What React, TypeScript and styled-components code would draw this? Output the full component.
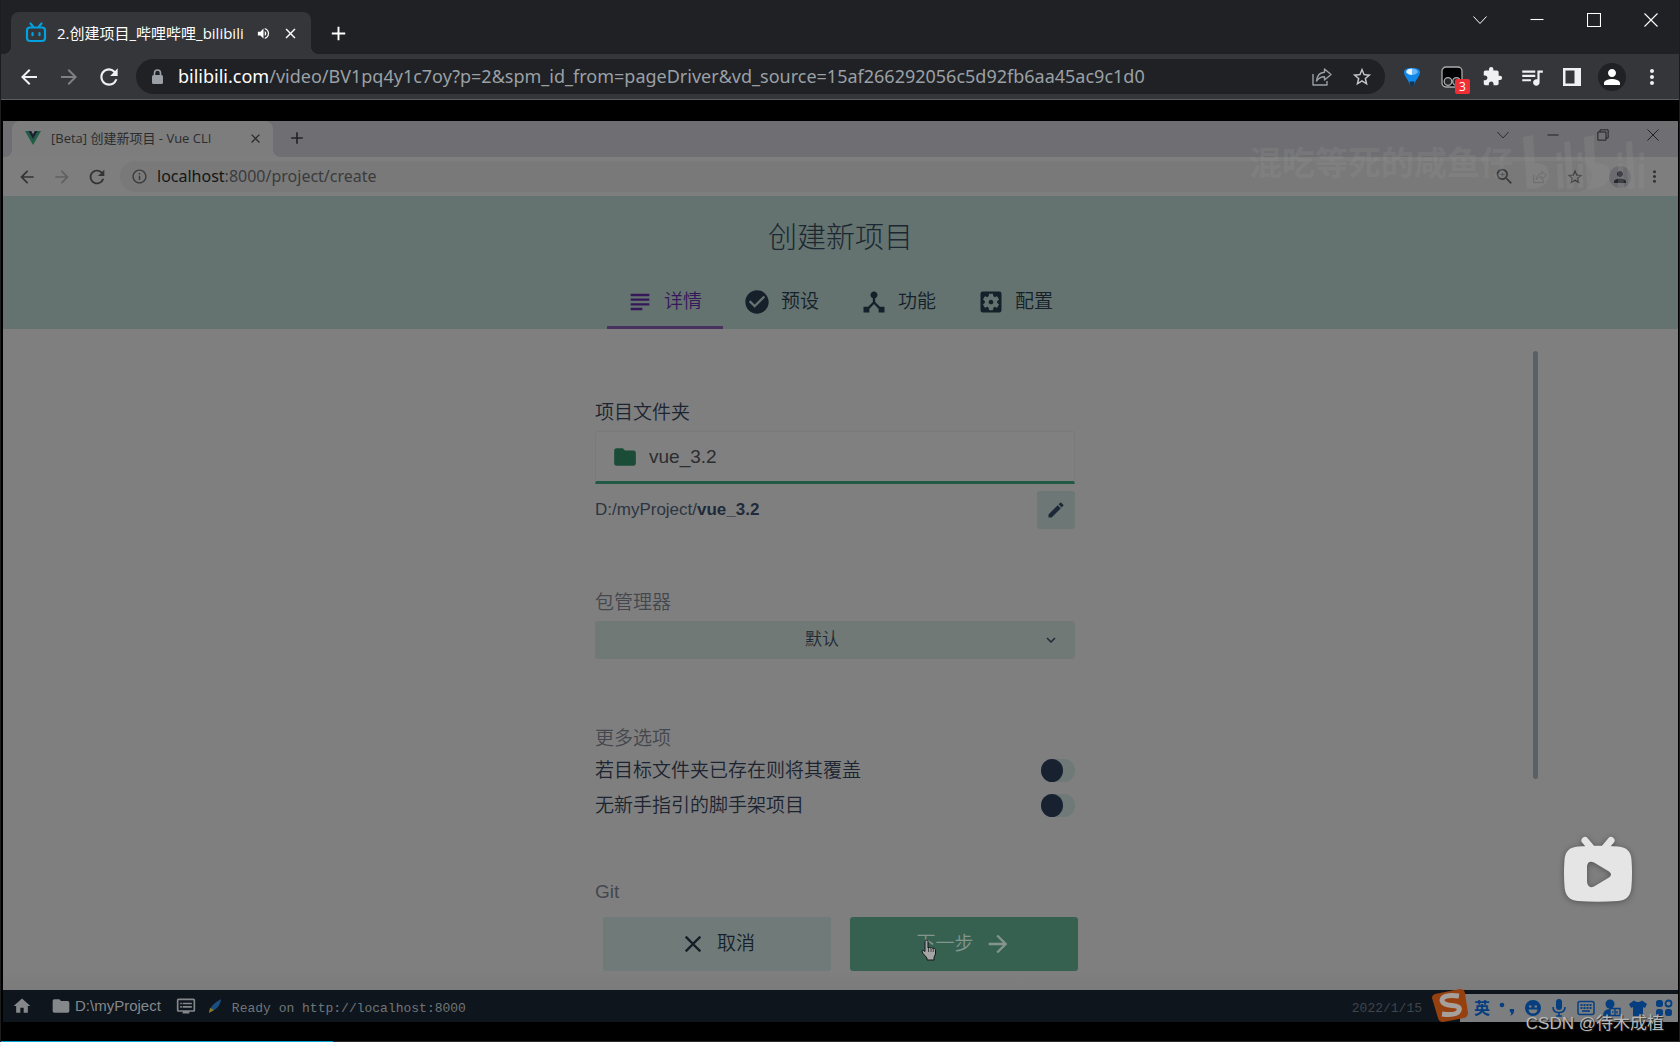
import React from "react";
import styled, { createGlobalStyle, css } from "styled-components";
import {
  MdArrowBack,
  MdArrowForward,
  MdCheckCircle,
  MdClose,
  MdDeviceHub,
  MdDvr,
  MdEdit,
  MdExtension,
  MdFolder,
  MdHome,
  MdKeyboardArrowDown,
  MdMoreVert,
  MdOutlineInfo,
  MdPerson,
  MdQueueMusic,
  MdRefresh,
  MdAdd,
  MdSettingsApplications,
  MdStarBorder,
  MdSubject,
  MdVolumeUp,
  MdZoomIn,
} from "react-icons/md";

const UI_FONT = `"Open Sans", "Noto Sans CJK SC", sans-serif`;
const APP_FONT = `"Liberation Sans", "Noto Sans CJK SC", sans-serif`;
const MONO_FONT = `"Liberation Mono", monospace`;

const GlobalStyle = createGlobalStyle`
  *, *::before, *::after { box-sizing: border-box; }
  body { margin: 0; background: #000; font-family: ${UI_FONT}; }
  button, input, select { font: inherit; color: inherit; }
  button { background: none; border: 0; padding: 0; }
  svg { display: block; flex: none; }
`;

/* ---------- outer browser ---------- */

const Window = styled.div`
  display: flex;
  flex-direction: column;
  height: 100vh;
  border: solid #1c1d1f;
  border-width: 0 1px;
  position: relative;
  overflow: hidden;
`;

const TabStrip = styled.div<{ $inner?: boolean }>`
  display: flex;
  align-items: flex-end;
  flex: none;
  height: ${(p) => (p.$inner ? 36 : 54)}px;
  padding-left: ${(p) => (p.$inner ? 9 : 10)}px;
  background: ${(p) => (p.$inner ? "#6f6f73" : "#202124")};
`;

const BrowserTab = styled.div<{ $inner?: boolean }>`
  --tab: ${(p) => (p.$inner ? "#7d7d7d" : "#35363a")};
  position: relative;
  display: flex;
  align-items: center;
  width: ${(p) => (p.$inner ? 261 : 300)}px;
  height: ${(p) => (p.$inner ? 36 : 42)}px;
  padding: ${(p) => (p.$inner ? "0 9px 2px 13px" : "0 12px 0 14px")};
  border-radius: 8px 8px 0 0;
  background: var(--tab);
  color: ${(p) => (p.$inner ? "#2b2c2e" : "#fff")};
  font-size: ${(p) => (p.$inner ? 13 : 15)}px;
  line-height: 20px;

  &::before,
  &::after {
    content: "";
    position: absolute;
    bottom: 0;
    width: 8px;
    height: 8px;
  }
  &::before {
    right: 100%;
    background: radial-gradient(circle at 0 0, transparent 8px, var(--tab) 8px);
  }
  &::after {
    left: 100%;
    background: radial-gradient(circle at 100% 0, transparent 8px, var(--tab) 8px);
  }
`;

const TabTitle = styled.span`
  flex: 1;
  margin-left: 10px;
  white-space: nowrap;
`;

const TabButton = styled.button`
  display: grid;
  place-items: center;
  width: 18px;
  height: 18px;
`;

const TabSound = styled(TabButton)`
  margin-right: 9px;
`;

const NewTab = styled.button<{ $inner?: boolean }>`
  display: grid;
  place-items: center;
  align-self: ${(p) => (p.$inner ? "flex-start" : "flex-end")};
  width: 32px;
  height: ${(p) => (p.$inner ? 34 : 42)}px;
  margin-left: ${(p) => (p.$inner ? 8 : 11)}px;
  color: ${(p) => (p.$inner ? "#232427" : "#fff")};
`;

const Controls = styled.div<{ $inner?: boolean }>`
  display: flex;
  align-self: flex-start;
  margin-left: auto;
  color: ${(p) => (p.$inner ? "#1e1f21" : "#fff")};

  button {
    display: grid;
    place-items: center;
    width: ${(p) => (p.$inner ? 50 : 57)}px;
    height: ${(p) => (p.$inner ? 28 : 40)}px;
  }
`;

const Toolbar = styled.div<{ $inner?: boolean }>`
  display: flex;
  align-items: center;
  flex: none;
  height: ${(p) => (p.$inner ? 39 : 46)}px;
  padding: ${(p) => (p.$inner ? "0 6px" : "0 7px 0 8px")};
  background: ${(p) => (p.$inner ? "#7e7e7e" : "#35363a")};
  border-bottom: ${(p) => (p.$inner ? "0" : "1px solid #5c5d60")};
  color: ${(p) => (p.$inner ? "#333436" : "#eef0f2")};
`;

const ToolButton = styled.button<{ $size?: number; $dim?: boolean }>`
  position: relative;
  display: grid;
  place-items: center;
  width: ${(p) => p.$size ?? 40}px;
  height: 34px;
  opacity: ${(p) => (p.$dim ? 0.4 : 1)};
`;

const Omnibox = styled.div<{ $inner?: boolean }>`
  display: flex;
  align-items: center;
  flex: 1;
  height: ${(p) => (p.$inner ? 31 : 35)}px;
  margin: ${(p) => (p.$inner ? "0 10px 0 6px" : "0 7px")};
  padding: ${(p) => (p.$inner ? "0 0 0 11px" : "0 3px 0 15px")};
  border-radius: 18px;
  background: ${(p) => (p.$inner ? "#797979" : "#202124")};
  color: ${(p) => (p.$inner ? "#3a3b3d" : "#9aa0a6")};
`;

const Url = styled.div<{ $inner?: boolean }>`
  flex: 1;
  margin-left: ${(p) => (p.$inner ? 9 : 14)}px;
  padding-bottom: 2px;
  font-family: "Noto Sans", ${UI_FONT};
  font-size: ${(p) => (p.$inner ? 16 : 18)}px;
  line-height: 24px;
  white-space: nowrap;
  overflow: hidden;

  b {
    font-weight: 400;
    color: ${(p) => (p.$inner ? "#141516" : "#fff")};
  }
`;

const Badge = styled.span`
  position: absolute;
  right: 2px;
  bottom: 0;
  width: 15px;
  height: 15px;
  border-radius: 2px;
  background: #ef2f35;
  color: #fff;
  font-size: 12px;
  line-height: 15px;
  text-align: center;
`;

const Avatar = styled.span<{ $inner?: boolean }>`
  display: grid;
  place-items: center;
  width: ${(p) => (p.$inner ? 22 : 28)}px;
  height: ${(p) => (p.$inner ? 22 : 28)}px;
  border-radius: 50%;
  background: ${(p) => (p.$inner ? "#6c6c70" : "#202124")};
  color: ${(p) => (p.$inner ? "#25262e" : "#fff")};
`;

/* ---------- video ---------- */

const Player = styled.main`
  display: flex;
  flex-direction: column;
  flex: 1;
  min-height: 0;
  padding: 21px 1px 0 2px;
  background: #000;
`;

const Frame = styled.section`
  position: relative;
  display: flex;
  flex-direction: column;
  flex: 1;
  min-height: 0;
  background: #7f7f7f;
`;

const Progress = styled.div`
  flex: none;
  height: 1px;
  margin: 19px -1px 0 -2px;
  background: #2a2a2a;
`;

const Played = styled.div`
  height: 1px;
  background: #00a1d6;
`;

const Uploader = styled.div`
  position: absolute;
  top: 14px;
  right: 30px;
  display: flex;
  align-items: center;
  gap: 10px;
  color: rgba(150, 150, 150, 0.24);
  font-size: 33px;
  font-weight: 700;
  line-height: 48px;
  pointer-events: none;
`;

const PlayBadge = styled.button`
  position: absolute;
  right: 46px;
  bottom: 120px;
  filter: drop-shadow(0 1px 3px rgba(0, 0, 0, 0.35));
`;

/* ---------- project wizard ---------- */

const Header = styled.header`
  display: flex;
  flex-direction: column;
  align-items: center;
  justify-content: space-between;
  flex: none;
  height: 133px;
  padding-top: 22px;
  background: #64736f;
  color: #1b2731;
`;

const Title = styled.h1`
  margin: 0;
  font-family: ${APP_FONT};
  font-size: 29px;
  font-weight: 300;
  line-height: 40px;
`;

const Steps = styled.nav`
  display: flex;
  gap: 1px;
  font-family: ${APP_FONT};
`;

const Step = styled.button<{ $active?: boolean }>`
  display: flex;
  align-items: center;
  gap: 10px;
  height: 56px;
  padding: 5px 21px 0 19px;
  border-bottom: 3px solid ${(p) => (p.$active ? "#48305f" : "transparent")};
  color: ${(p) => (p.$active ? "#35185a" : "#15202a")};
  font-size: 19px;
  font-weight: 350;
  line-height: 28px;
`;

const Scroll = styled.div`
  display: grid;
  grid-template-columns: 1fr 480px 1fr;
  flex: 1;
  min-height: 0;
  padding-right: 11px;
  overflow: hidden;
  color: #1b2430;
  font-family: ${APP_FONT};
  font-size: 19px;
  font-weight: 350;
  line-height: 28px;
`;

const Thumb = styled.div`
  grid-column: 3;
  justify-self: end;
  width: 5px;
  height: 428px;
  margin: 22px 129px 0 0;
  border-radius: 3px;
  background: #596167;
`;

const Form = styled.form`
  grid-column: 2;
  display: flex;
  flex-direction: column;
  padding-top: 70px;
`;

const Group = styled.fieldset<{ $after: number }>`
  display: flex;
  flex-direction: column;
  min-width: 0;
  margin: 0 0 ${(p) => p.$after}px;
  padding: 0;
  border: 0;
`;

const labelStyle = css<{ $soft?: boolean }>`
  padding: 0;
  color: ${(p) => (p.$soft ? "#44474e" : "#1b2430")};
`;

const Label = styled.label<{ $soft?: boolean }>`
  ${labelStyle}
  margin-bottom: 4px;
`;

const Legend = styled.legend<{ $soft?: boolean }>`
  ${labelStyle}
`;

const FolderField = styled.div`
  display: flex;
  align-items: center;
  gap: 11px;
  height: 53px;
  padding: 0 16px;
  border: 1px solid #7a7a7a;
  border-bottom: 3px solid #235a45;
  border-radius: 3px 3px 0 0;
  background: #808080;
  color: #1a4c38;

  input {
    flex: 1;
    min-width: 0;
    padding: 0;
    border: 0;
    outline: 0;
    background: none;
    color: #2b2d31;
  }
`;

const PathRow = styled.div`
  display: flex;
  justify-content: space-between;
  margin-top: 7px;
  color: #2c3542;
  font-size: 17px;
  line-height: 38px;

  b {
    color: #1f2b3a;
  }
`;

const EditButton = styled.button`
  display: grid;
  place-items: center;
  width: 38px;
  height: 38px;
  border-radius: 3px;
  background: #6d7775;
  color: #1d2838;
`;

const SelectBox = styled.div`
  position: relative;
  color: #1f2a33;

  select {
    appearance: none;
    width: 100%;
    height: 38px;
    padding: 0 26px 0 0;
    border: 0;
    border-radius: 3px;
    background: #717977;
    font-size: 17px;
    text-align: center;
    text-align-last: center;
  }

  svg {
    position: absolute;
    top: 10px;
    right: 15px;
    pointer-events: none;
  }
`;

const SwitchRow = styled.label`
  display: flex;
  align-items: center;
  justify-content: space-between;
  height: 35px;
`;

const Switch = styled.input`
  appearance: none;
  width: 34px;
  height: 23px;
  margin: 0;
  border-radius: 12px;
  background: #6f7977;

  &::before {
    content: "";
    display: block;
    width: 22px;
    height: 23px;
    border-radius: 50%;
    background: #182130;
  }
`;

const Actions = styled.footer`
  display: flex;
  justify-content: center;
  gap: 19px;
  flex: none;
  padding: 19px 0;
  background: linear-gradient(#7f7f7f 80%, #7b7b7b);
`;

const Action = styled.button<{ $primary?: boolean }>`
  position: relative;
  display: flex;
  align-items: center;
  justify-content: center;
  gap: 10px;
  width: 228px;
  height: 54px;
  border-radius: 3px;
  background: ${(p) => (p.$primary ? "#366151" : "#707a78")};
  color: ${(p) => (p.$primary ? "#83958e" : "#161f29")};
  font-family: ${APP_FONT};
  font-size: 19px;
  font-weight: 350;
  line-height: 28px;
`;

const HandCursor = styled.svg`
  position: absolute;
  left: 71px;
  top: 22px;
`;

/* ---------- status bar ---------- */

const Status = styled.div`
  display: flex;
  align-items: center;
  flex: none;
  height: 32px;
  padding-left: 9px;
  background: #0e151d;
  color: #85888b;
`;

const StatusPath = styled.button`
  display: flex;
  align-items: center;
  gap: 4px;
  margin: 0 15px 0 19px;
  font-family: ${APP_FONT};
  font-size: 15px;
  line-height: 20px;
`;

const Log = styled.span<{ $faint?: boolean }>`
  margin: ${(p) => (p.$faint ? "5px 0 0 auto" : "5px 0 0 10px")};
  color: ${(p) => (p.$faint ? "#3f454b" : "#70757a")};
  font-family: ${MONO_FONT};
  font-size: 13px;
  line-height: 20px;
`;

const Quill = styled.svg`
  margin-left: 12px;
`;

const Ime = styled.div`
  position: relative;
  display: flex;
  align-items: center;
  align-self: flex-end;
  justify-content: space-between;
  width: 218px;
  height: 28px;
  margin-left: 38px;
  padding: 0 5px 0 14px;
  background: #7d7e80;
  color: #063f80;
  font-size: 16px;
  font-weight: 700;
  line-height: 24px;
`;

const Sogou = styled.svg`
  position: absolute;
  left: -28px;
  bottom: 0;
`;

const Credit = styled.div`
  position: absolute;
  right: 15px;
  bottom: 6px;
  color: #b9b9b9;
  font-family: ${APP_FONT};
  font-size: 17px;
  line-height: 24px;
  text-shadow: 1px 1px 1px #222;
`;

/* ---------- drawings ---------- */

const BiliIcon = () => (
  <svg width="22" height="22" viewBox="0 0 22 22" fill="none" stroke="#00a1e0" strokeLinecap="round">
    <rect x="2" y="5.5" width="18" height="13.5" rx="3" strokeWidth="2.2" />
    <path d="M5.500 1.500 8 4.500M16.500 1.500 14 4.500" strokeWidth="2.2" />
    <path d="M7.500 11v2.200M14.500 11v2.200" strokeWidth="2.200" />
  </svg>
);

const VueIcon = () => (
  <svg width="16" height="14" viewBox="0 0 16 14">
    <path d="M0 0h3.2L8 8.3 12.8 0H16L8 14z" fill="#1f5e46" />
    <path d="M3.2 0H6.2L8 3.2 9.8 0h3L8 8.3z" fill="#19222e" />
  </svg>
);

const LockIcon = () => (
  <svg width="13" height="16" viewBox="0 0 13 16">
    <rect x="1" y="6" width="11" height="9" rx="1.5" fill="currentColor" />
    <path d="M3.500 7V4a3 3 0 016 0v3" fill="none" stroke="currentColor" strokeWidth="1.600" />
  </svg>
);

const ShareIcon = ({ size = 20 }: { size?: number }) => (
  <svg width={size} height={size} viewBox="0 0 20 20" fill="none" stroke="currentColor" strokeWidth="1.4" strokeLinejoin="round">
    <path d="M1 7v11h14v-4" />
    <path d="M12.5 2 19 7.5 12.5 13V9.8C9 9.8 6.500 11 4.500 14 5 9 8 5.500 12.500 5.200z" />
  </svg>
);

const Chevron = ({ size = 14 }: { size?: number }) => (
  <svg width={size} height={size} viewBox="0 0 14 14" fill="none" stroke="currentColor">
    <path d="M.5 3.500 7 10.500 13.500 3.500" />
  </svg>
);

const WinIcon = ({ d, size = 14 }: { d: string; size?: number }) => (
  <svg width={size} height={size} viewBox="0 0 14 14" fill="none" stroke="currentColor" strokeWidth="1.1">
    <path d={d} />
  </svg>
);

const BalloonIcon = () => (
  <svg width="18" height="20" viewBox="0 0 18 20">
    <path d="M1 5.500C1 2 4 1 9 1s8 1 8 4.500S13 12 10.500 19h-3C5 12 1 9 1 5.500z" fill="#1187ea" />
    <path d="M3 5C3.500 2.500 6 1.500 9 1.500V8Q5 8 3 5z" fill="#e6f3ff" />
    <path d="M9 1.500c3 0 5 1 6 3.500Q13 8 9 8z" fill="#6db9f6" />
    <path d="M6.500 14.500h5L10.500 19h-3z" fill="#16324f" />
  </svg>
);

const MonkeyIcon = () => (
  <svg width="22" height="22" viewBox="0 0 22 22" stroke="#a9abad" strokeWidth="1.300">
    <rect x="1" y="1" width="20" height="20" rx="4" fill="#000" />
    <circle cx="7" cy="15.500" r="3.800" fill="#26272a" />
    <circle cx="15.500" cy="15.500" r="3.800" fill="#26272a" />
  </svg>
);

const PanelIcon = () => (
  <svg width="18" height="18" viewBox="0 0 18 18">
    <path d="M0 0h18v18H0zM2.500 2.500v13h9v-13z" fill="currentColor" fillRule="evenodd" />
  </svg>
);

const BiliWordmark = () => (
  <svg width="125" height="56" viewBox="0 0 125 56" fill="currentColor">
    <path d="M0 2l10-2 2 28q13-1 14 12-1 14-22 14z" />
    <path d="M33 18l5-1 1 8-5 1zM34 29l5-1 2 25-6 1zM41 7l6-1 4 47-7 1zM54 18l5-1v8l-4 1zM55 29l5-1v25h-5z" />
    <path d="M61 2l10-2 1 28q15-1 15 12-1 14-23 14z" />
    <path d="M94 18l5-1v8l-4 1zM95 29l5-1 1 25h-6zM103 7l6-1 3 47-7 1zM116 18l5-1v8l-4 1zM116 29l5-1v25l-5 1z" />
  </svg>
);

const TvPlay = () => (
  <svg width="68" height="66" viewBox="0 0 68 66" fill="#e5e5e5">
    <path d="M21 4.500 29 14M47 4.500 39 14" stroke="#e5e5e5" strokeWidth="7" strokeLinecap="round" />
    <path
      fillRule="evenodd"
      d="M14 10.500Q34 9 54 10.500 67 11.500 67.500 24 68.500 37 67.500 50 67 64 54 65 34 66.500 14 65 1 64 .5 50-.5 37 .5 24 1 11.500 14 10.500zM23 30v16q1 7 7 4.500l15-9q4-3 0-6l-15-9Q24 24 23 30z"
    />
  </svg>
);

const ImeIcon = ({ children }: { children: React.ReactNode }) => (
  <svg width="18" height="18" viewBox="0 0 18 18" fill="currentColor">
    {children}
  </svg>
);

const PLAYED = 0.198;

export default function App() {
  return (
    <Window>
      <GlobalStyle />
      <TabStrip>
        <BrowserTab>
          <BiliIcon />
          <TabTitle>2.创建项目_哔哩哔哩_bilibili</TabTitle>
          <TabSound aria-label="静音">
            <MdVolumeUp size={15} />
          </TabSound>
          <TabButton aria-label="关闭标签页">
            <MdClose size={17} />
          </TabButton>
        </BrowserTab>
        <NewTab aria-label="新标签页">
          <MdAdd size={23} />
        </NewTab>
        <Controls>
          <button aria-label="搜索标签页"><Chevron /></button>
          <button aria-label="最小化"><WinIcon d="M.5 6.500h13" /></button>
          <button aria-label="最大化"><WinIcon d="M.5.5h13v13H.5z" /></button>
          <button aria-label="关闭"><WinIcon d="M.5.5l13 13M13.500.5l-13 13" /></button>
        </Controls>
      </TabStrip>
      <Toolbar>
        <ToolButton aria-label="后退"><MdArrowBack size={24} /></ToolButton>
        <ToolButton aria-label="前进" $dim><MdArrowForward size={24} /></ToolButton>
        <ToolButton aria-label="重新加载"><MdRefresh size={26} /></ToolButton>
        <Omnibox>
          <LockIcon />
          <Url role="textbox" aria-label="地址">
            <b>bilibili.com</b>/video/BV1pq4y1c7oy?p=2&amp;spm_id_from=pageDriver&amp;vd_source=15af266292056c5d92fb6aa45ac9c1d0
          </Url>
          <ToolButton aria-label="分享"><ShareIcon /></ToolButton>
          <ToolButton aria-label="收藏"><MdStarBorder size={22} color="#c4c7ca" /></ToolButton>
        </Omnibox>
        <ToolButton aria-label="扩展"><BalloonIcon /></ToolButton>
        <ToolButton aria-label="脚本">
          <MonkeyIcon />
          <Badge>3</Badge>
        </ToolButton>
        <ToolButton aria-label="扩展程序"><MdExtension size={21} /></ToolButton>
        <ToolButton aria-label="媒体"><MdQueueMusic size={26} /></ToolButton>
        <ToolButton aria-label="侧边栏"><PanelIcon /></ToolButton>
        <ToolButton aria-label="用户">
          <Avatar><MdPerson size={24} /></Avatar>
        </ToolButton>
        <ToolButton aria-label="菜单"><MdMoreVert size={24} /></ToolButton>
      </Toolbar>

      <Player>
        <Frame>
          <TabStrip $inner>
            <BrowserTab $inner>
              <VueIcon />
              <TabTitle>[Beta] 创建新项目 - Vue CLI</TabTitle>
              <TabButton aria-label="关闭标签页"><MdClose size={15} /></TabButton>
            </BrowserTab>
            <NewTab $inner aria-label="新标签页"><MdAdd size={20} /></NewTab>
            <Controls $inner>
              <button aria-label="搜索标签页"><Chevron size={12} /></button>
              <button aria-label="最小化"><WinIcon size={12} d="M.5 7h13" /></button>
              <button aria-label="还原"><WinIcon size={12} d="M1 3.500h9.500V13H1zM3.500 3.500V1H13v9.500h-2.500" /></button>
              <button aria-label="关闭"><WinIcon size={12} d="M.5.5l13 13M13.500.5l-13 13" /></button>
            </Controls>
          </TabStrip>
          <Toolbar $inner>
            <ToolButton $size={35} aria-label="后退"><MdArrowBack size={20} /></ToolButton>
            <ToolButton $size={35} aria-label="前进" $dim><MdArrowForward size={20} /></ToolButton>
            <ToolButton $size={35} aria-label="重新加载"><MdRefresh size={22} /></ToolButton>
            <Omnibox $inner>
              <MdOutlineInfo size={17} />
              <Url $inner role="textbox" aria-label="地址">
                <b>localhost</b>:8000/project/create
              </Url>
              <ToolButton $size={35} aria-label="缩放"><MdZoomIn size={21} /></ToolButton>
              <ToolButton $size={35} aria-label="分享" $dim><ShareIcon size={14} /></ToolButton>
              <ToolButton $size={35} aria-label="收藏"><MdStarBorder size={18} /></ToolButton>
            </Omnibox>
            <ToolButton $size={35} aria-label="用户">
              <Avatar $inner><MdPerson size={18} /></Avatar>
            </ToolButton>
            <ToolButton $size={35} aria-label="菜单"><MdMoreVert size={19} /></ToolButton>
          </Toolbar>

          <Header>
            <Title>创建新项目</Title>
            <Steps>
              <Step $active><MdSubject size={28} />详情</Step>
              <Step><MdCheckCircle size={28} />预设</Step>
              <Step><MdDeviceHub size={28} />功能</Step>
              <Step><MdSettingsApplications size={28} />配置</Step>
            </Steps>
          </Header>

          <Scroll>
            <Form>
              <Group $after={60}>
                <Label htmlFor="folder">项目文件夹</Label>
                <FolderField>
                  <MdFolder size={26} />
                  <input id="folder" defaultValue="vue_3.2" />
                </FolderField>
                <PathRow>
                  <span>D:/myProject/<b>vue_3.2</b></span>
                  <EditButton type="button" aria-label="编辑路径"><MdEdit size={20} /></EditButton>
                </PathRow>
              </Group>
              <Group $after={66}>
                <Label $soft htmlFor="manager">包管理器</Label>
                <SelectBox>
                  <select id="manager"><option>默认</option></select>
                  <MdKeyboardArrowDown size={18} />
                </SelectBox>
              </Group>
              <Group $after={55}>
                <Legend $soft>更多选项</Legend>
                <SwitchRow>
                  若目标文件夹已存在则将其覆盖
                  <Switch type="checkbox" />
                </SwitchRow>
                <SwitchRow>
                  无新手指引的脚手架项目
                  <Switch type="checkbox" />
                </SwitchRow>
              </Group>
              <Group $after={0}>
                <Legend $soft>Git</Legend>
              </Group>
            </Form>
            <Thumb />
          </Scroll>

          <Actions>
            <Action><MdClose size={28} />取消</Action>
            <Action $primary>
              下一步
              <MdArrowForward size={28} />
              <HandCursor width="16" height="22" viewBox="0 0 16 22" fill="#a5a5a5" stroke="#15181a">
                <path d="M5.500 1q1.500 0 1.500 1.500V9l1-1 1.500 1 1-.5 1.500 1 1.200-.3 1.300 1.300v4.500L13 18.500V21H6v-2L2 14.500.8 12q1.200-1.500 3.200.5V2.500Q4 1 5.500 1z" />
                <path d="M7.500 9v4M10 9.500V13M12.300 10v3" strokeWidth=".7" />
              </HandCursor>
            </Action>
          </Actions>

          <Status>
            <MdHome size={20} />
            <StatusPath><MdFolder size={20} />D:\myProject</StatusPath>
            <MdDvr size={20} />
            <Quill width="14" height="16" viewBox="0 0 14 16">
              <path d="M1 14Q2 7 13 1q0 7-8 12z" fill="#1b4f80" />
              <path d="M1 15l1-5 4 2z" fill="#8d7a1e" />
            </Quill>
            <Log>Ready on http://localhost:8000</Log>
            <Log $faint>2022/1/15</Log>
            <Ime>
              <Sogou width="36" height="33" viewBox="0 0 36 33">
                <path d="M3 5 28 0q4 0 5 4l3 20q0 4-4 5L11 33q-4 0-5-4L0 9q0-3 3-4z" fill="#96400f" />
                <path d="M27 7Q10 5 10 11.500 11 16 20 16.500T27 21.500Q25 27 10 25" fill="none" stroke="#a6a09c" strokeWidth="5" />
              </Sogou>
              英
              <ImeIcon><circle cx="4" cy="6" r="2.300" /><path d="M12 10h4q1 5-4 7 2-2 1-3.500-2-1-1-3.500z" /></ImeIcon>
              <ImeIcon>
                <path fillRule="evenodd" d="M9 1a8 8 0 100 16A8 8 0 009 1zM5 6.500h2.500v2H5zM10.500 6.500H13v2h-2.500zM4.500 10.500h9Q13 14.500 9 14.500t-4.500-4z" />
              </ImeIcon>
              <ImeIcon>
                <rect x="6" y="0" width="6" height="11" rx="3" />
                <path d="M3 8q0 5.500 6 5.500T15 8M9 13v4M6 17h6" fill="none" stroke="currentColor" strokeWidth="1.600" />
              </ImeIcon>
              <ImeIcon>
                <rect x="1" y="2.500" width="16" height="13" rx="2" fill="none" stroke="currentColor" strokeWidth="1.500" />
                <path d="M3.500 6h11M3.500 9h11" stroke="currentColor" strokeWidth="2" strokeDasharray="2 1" />
                <path d="M5 12h8" stroke="currentColor" strokeWidth="1.600" />
              </ImeIcon>
              <ImeIcon>
                <circle cx="7" cy="5" r="4.500" />
                <path d="M0 17q0-7 7-7v7z" />
                <path d="M7 9.500h10v7H7zM12 9.500v7M9 13h1.500M14 12v2.500" fill="none" stroke="currentColor" strokeWidth="1.400" />
              </ImeIcon>
              <ImeIcon><path d="M5 1.500q4 3 8 0l5 3.500-2 4-2-1v9H4V8L2 9 0 5z" /></ImeIcon>
              <ImeIcon>
                <rect x="1" y="1" width="7" height="7" rx="2.500" />
                <circle cx="13.500" cy="4.500" r="3" fill="none" stroke="currentColor" strokeWidth="1.800" />
                <rect x="1" y="10" width="7" height="7" rx="2.500" />
                <rect x="10" y="10" width="7" height="7" rx="2.500" />
              </ImeIcon>
            </Ime>
          </Status>

          <Uploader aria-hidden>
            混吃等死的咸鱼仔
            <BiliWordmark />
          </Uploader>
          <PlayBadge aria-label="播放"><TvPlay /></PlayBadge>
        </Frame>
        <Progress>
          <Played style={{ width: `${PLAYED * 100}%` }} />
        </Progress>
      </Player>
      <Credit>CSDN @待木成植</Credit>
    </Window>
  );
}
